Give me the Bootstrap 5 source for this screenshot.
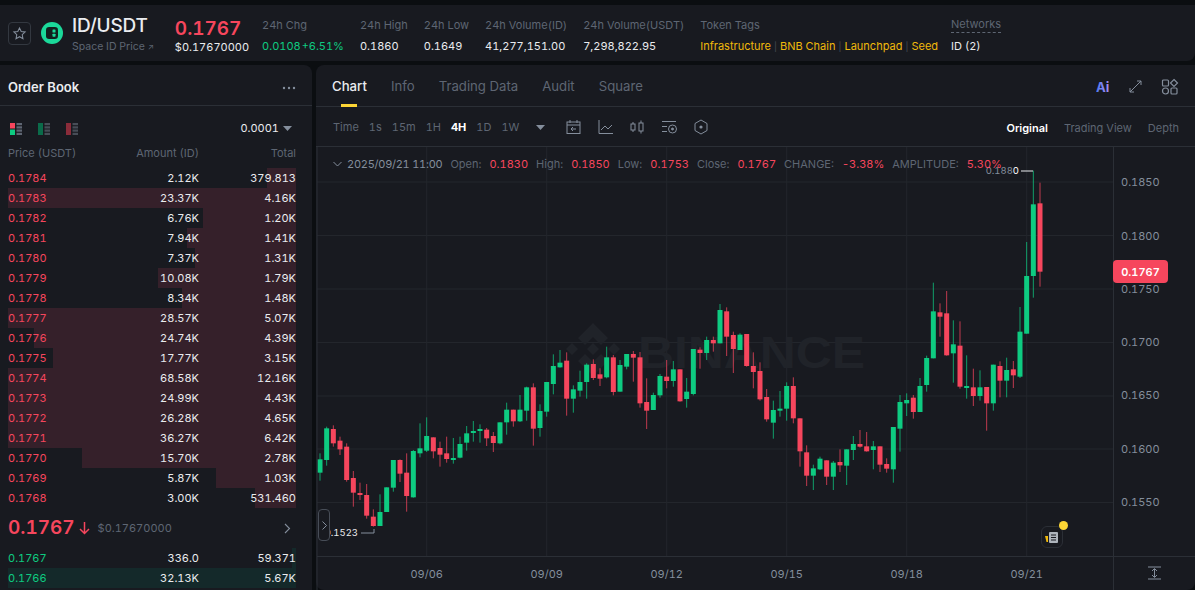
<!DOCTYPE html>
<html lang="en">

<head>
    <meta charset="UTF-8">
    <meta name="viewport" content="width=device-width, initial-scale=1.0">
    <title>ID/USDT</title>
    <link href="https://cdn.jsdelivr.net/npm/bootstrap@5.3.0/dist/css/bootstrap.min.css" rel="stylesheet">
    <style>
        html, body { height: 590px; overflow: hidden; }
        body { background: #0b0e11; color: #eaecef; font-family: "Inter", "Liberation Sans", sans-serif; font-size: 11px; font-variant-numeric: tabular-nums; }
        .panel { background: #181a20; }
        .muted { color: #848e9c; }
        .dim { color: #5e6673; }
        .up { color: #0ecb81; }
        .down { color: #f6465d; }
        .line-b { border-bottom: 1px solid #2b2f36; }

        .top-bar { margin-top: 5px; height: 56px; padding: 0 0 0 8px; border-radius: 0 0 8px 0; }
        .star-box { width: 23px; height: 23px; border: 1px solid #333840; border-radius: 4px; margin-right: 10px; }
        .logo { margin-right: 9px; }
        .pair-col { margin-top: 3px; }
        .pair-name { font-size: 19px; font-weight: 500; line-height: 22px; letter-spacing: -.2px; }
        .pair-sub { margin-top: 3px; line-height: 14px; font-size: 10.5px; color: #5e6673; }
        .price-col { margin: 6px 13px 0 21px; }
        .last-price { font-size: 19px; font-weight: 600; line-height: 22px; }
        .stats { gap: 16px; margin-top: 5px; }
        .stat-label { color: #5e6673; line-height: 14px; font-size: 11px; margin-bottom: 7px; }
        .stat-val { line-height: 14px; font-size: 11px; }
        .chg { word-spacing: -2px; }
        .tags { color: #f0b90b; }
        .tags-col { margin-right: -3px; }
        .tags i { font-style: normal; color: #474d57; margin: 0 3px; font-size: 9px; }
        .net-label { border-bottom: 1px dashed #5e6673; margin-bottom: 6px; padding-bottom: 1px; line-height: 13px; }

        .main-row { margin-top: 4px; height: 525px; gap: 4px; }
        .book { width: 312px; border-radius: 0 8px 0 0; }
        .book-head { height: 41px; padding: 6px 16px 0 8px; font-size: 13px; font-weight: 600; }
        .book-tools { height: 45px; padding: 0 20px 0 10px; }
        .book-cols { height: 16px; padding: 0 16px 0 8px; color: #5e6673; font-size: 11px; margin-top: -6px; margin-bottom: 7px; }
        .c-amt { width: 91px; text-align: right; margin-left: auto; }
        .c-tot { width: 97px; text-align: right; }
        .book-rows { padding: 0 16px 0 8px; }
        .ob-row { height: 20px; font-size: 11px; background-repeat: no-repeat; background-position: right top; }
        .ob-ask { background-image: linear-gradient(#35202a, #35202a); }
        .ob-bid { background-image: linear-gradient(#14292a, #14292a); }
        .mid { height: 40px; padding: 0 21px 0 8px; }
        .mid-price { font-size: 19px; font-weight: 600; }

        .chart-panel { flex: 1; border-radius: 8px 0 8px 8px; min-width: 0; }
        .tabs { height: 42px; padding: 2px 16px 0 16px; font-size: 13.2px; gap: 24px; color: #5e6673; }
        .tab { height: 40px; }
        .tab.active { color: #eaecef; font-weight: 500; position: relative; }
        .tab.active::after { content: ""; position: absolute; left: 9px; width: 16px; height: 3px; bottom: 0; background: #fcd535; }
        .tab-icons { gap: 14px; }
        .tools { height: 40px; padding: 1px 16px 0 17px; font-size: 11px; color: #5e6673; }
        .tf { gap: 10px; }
        .tf-caret { margin-left: 7px; }
        .tool-icons { gap: 15.5px; margin-left: 20px; }
        .views { gap: 16px; margin-left: auto; margin-top: 2px; }
        .chart-wrap { position: relative; height: 443px; }
        .chart-wrap svg.plot { display: block; }
        .legend { position: absolute; left: 17px; top: 10px; color: #5e6673; font-size: 11px; line-height: 14px; gap: 8px; }
        .legend-chev { margin-right: -3px; }
        .legend-date { letter-spacing: -.25px; }
        .toggle { position: absolute; left: 2px; top: 362px; width: 12px; height: 32px; background: #181a20; border: 1px solid #474d57; border-radius: 4px; }
        .news { position: absolute; left: 725px; top: 379px; width: 22px; height: 22px; border: 1px solid #2b2f36; border-radius: 6px; background: #181a20; }
        .news-dot { position: absolute; right: -6px; top: -6px; width: 9px; height: 9px; border-radius: 50%; background: #fcd535; }
    </style>
</head>

<body>
    <!-- Cabecalho do par -->
    <header class="panel top-bar d-flex align-items-center">
        <div class="star-box d-flex align-items-center justify-content-center">
            <svg width="15" height="15" viewBox="0 0 16 16" fill="none" stroke="#848e9c" stroke-width="1.1"><path d="M8 2l1.8 3.9 4.2.5-3.1 2.9.8 4.2L8 11.4l-3.7 2.1.8-4.2L2 6.4l4.2-.5z"/></svg>
        </div>
        <svg class="logo" width="22" height="22" viewBox="0 0 22 22"><circle cx="11" cy="11" r="11" fill="#1bd99a"/><rect x="5" y="5" width="12" height="12" rx="3.2" fill="#12201e"/><rect x="11.5" y="7.5" width="3" height="3" rx=".6" fill="#1bd99a"/><rect x="11.5" y="11.7" width="3" height="3" rx=".6" fill="#1bd99a"/></svg>
        <div class="pair-col">
            <div class="pair-name">ID/USDT</div>
            <div class="pair-sub">Space ID Price <span style="font-size:8px">↗</span></div>
        </div>
        <div class="price-col">
            <div class="last-price down">0.1767</div>
            <div class="stat-val">$0.17670000</div>
        </div>
        <div class="d-flex stats">
            <div><div class="stat-label">24h Chg</div><div class="stat-val up chg">0.0108 +6.51%</div></div>
            <div><div class="stat-label">24h High</div><div class="stat-val">0.1860</div></div>
            <div><div class="stat-label">24h Low</div><div class="stat-val">0.1649</div></div>
            <div><div class="stat-label">24h Volume(ID)</div><div class="stat-val">41,277,151.00</div></div>
            <div><div class="stat-label">24h Volume(USDT)</div><div class="stat-val">7,298,822.95</div></div>
            <div class="tags-col"><div class="stat-label">Token Tags</div><div class="stat-val tags">Infrastructure<i>|</i>BNB Chain<i>|</i>Launchpad<i>|</i>Seed</div></div>
            <div><div class="stat-label net-label">Networks</div><div class="stat-val">ID (2)</div></div>
        </div>
    </header>

    <div class="main-row d-flex">
        <!-- Livro de ofertas -->
        <aside class="panel book">
            <div class="book-head line-b d-flex align-items-center justify-content-between">
                <span>Order Book</span>
                <svg width="14" height="4" viewBox="0 0 14 4" fill="#848e9c"><circle cx="2" cy="2" r="1.2"/><circle cx="7" cy="2" r="1.2"/><circle cx="12" cy="2" r="1.2"/></svg>
            </div>
            <div class="book-tools d-flex align-items-center">
                <svg width="12" height="12" viewBox="0 0 12 12" class="me-3"><rect width="5" height="5.5" fill="#f6465d"/><rect y="6.5" width="5" height="5.5" fill="#0ecb81"/><rect x="6.5" width="5.5" height="2.2" fill="#5e6673"/><rect x="6.5" y="3.3" width="5.5" height="2.2" fill="#5e6673"/><rect x="6.5" y="6.5" width="5.5" height="2.2" fill="#5e6673"/><rect x="6.5" y="9.8" width="5.5" height="2.2" fill="#5e6673"/></svg>
                <svg width="12" height="12" viewBox="0 0 12 12" class="me-3"><rect width="5" height="12" fill="#0b6b4a"/><rect x="6.5" width="5.5" height="2.2" fill="#474d57"/><rect x="6.5" y="3.3" width="5.5" height="2.2" fill="#474d57"/><rect x="6.5" y="6.5" width="5.5" height="2.2" fill="#474d57"/><rect x="6.5" y="9.8" width="5.5" height="2.2" fill="#474d57"/></svg>
                <svg width="12" height="12" viewBox="0 0 12 12"><rect width="5" height="12" fill="#8a2c3a"/><rect x="6.5" width="5.5" height="2.2" fill="#474d57"/><rect x="6.5" y="3.3" width="5.5" height="2.2" fill="#474d57"/><rect x="6.5" y="6.5" width="5.5" height="2.2" fill="#474d57"/><rect x="6.5" y="9.8" width="5.5" height="2.2" fill="#474d57"/></svg>
                <span class="ms-auto">0.0001</span>
                <svg class="ms-1" width="9" height="5" viewBox="0 0 9 5" fill="#848e9c"><path d="M0 0h9L4.5 5z"/></svg>
            </div>
            <div class="book-cols d-flex align-items-center">
                <span>Price (USDT)</span><span class="c-amt">Amount (ID)</span><span class="c-tot">Total</span>
            </div>
            <div class="book-rows" id="asks"></div>
            <div class="mid d-flex align-items-center">
                <span class="mid-price down">0.1767</span>
                <svg class="ms-1 me-2" width="11" height="14" viewBox="0 0 11 14" fill="none" stroke="#f6465d" stroke-width="1.5"><path d="M5.5 1v11M1 8l4.5 4.5L10 8"/></svg>
                <span class="dim">$0.17670000</span>
                <svg class="ms-auto" width="7" height="11" viewBox="0 0 7 11" fill="none" stroke="#848e9c" stroke-width="1.1"><path d="M1 1l4.5 4.5L1 10"/></svg>
            </div>
            <div class="book-rows" id="bids"></div>
        </aside>

        <!-- Grafico -->
        <section class="panel chart-panel">
            <div class="tabs line-b d-flex align-items-center">
                <span class="tab active d-flex align-items-center">Chart</span>
                <span class="tab d-flex align-items-center">Info</span>
                <span class="tab d-flex align-items-center">Trading Data</span>
                <span class="tab d-flex align-items-center">Audit</span>
                <span class="tab d-flex align-items-center">Square</span>
                <span class="ms-auto d-flex align-items-center tab-icons">
                    <svg width="18" height="13" viewBox="0 0 18 13"><defs><linearGradient id="ai" x1="0" x2="1"><stop offset="0" stop-color="#4f7bf0"/><stop offset="1" stop-color="#a98cf5"/></linearGradient></defs><text x="0" y="11.500" font-family="Inter, sans-serif" font-size="13" font-weight="700" fill="url(#ai)">Ai</text></svg>
                    <svg class="me-1" width="15" height="15" viewBox="0 0 15 15" fill="none" stroke="#848e9c" stroke-width="1"><path d="M2 13L13 2M9 2h4v4M2 9v4h4"/></svg>
                    <svg width="18" height="18" viewBox="0 0 18 18" fill="none" stroke="#848e9c" stroke-width="1.2"><rect x="1.5" y="2" width="6" height="6" rx="1"/><path d="M13 1.5l3.5 3.5-3.5 3.5L9.5 5z"/><circle cx="4.5" cy="13" r="3"/><rect x="10" y="10" width="6" height="6" rx="1"/></svg>
                </span>
            </div>
            <div class="tools line-b d-flex align-items-center">
                <div class="d-flex align-items-center tf">
                    <span>Time</span><span>1s</span><span>15m</span><span>1H</span><span class="fw-bold text-white">4H</span><span>1D</span><span>1W</span>
                    <svg class="tf-caret" width="9" height="5" viewBox="0 0 9 5" fill="#848e9c"><path d="M0 0h9L4.5 5z"/></svg>
                </div>
                <div class="d-flex align-items-center tool-icons">
                    <svg width="16" height="16" viewBox="0 0 16 16" fill="none" stroke="#848e9c"><rect x="2" y="3" width="13" height="11.5"/><path d="M2 6h13M5 1v3M12 1v3M11 10H6M8 8l-2 2 2 2"/></svg>
                    <svg width="17" height="16" viewBox="0 0 17 16" fill="none" stroke="#848e9c"><path d="M2 1v13.5h14M4 11l4-4 3 3 4-4"/></svg>
                    <svg width="16" height="16" viewBox="0 0 16 16" fill="none" stroke="#848e9c"><rect x="2" y="5" width="4" height="6"/><rect x="10" y="4" width="4" height="8"/><path d="M4 3v2M4 11v2M12 1.500v2.500M12 12v2.500"/></svg>
                    <svg width="17" height="16" viewBox="0 0 17 16" fill="none" stroke="#848e9c"><path d="M1 2.500h14M1 7.500h5M1 12.500h5"/><circle cx="11.500" cy="10" r="4"/><circle cx="11.500" cy="10" r="1" fill="#848e9c"/></svg>
                    <svg width="16" height="16" viewBox="0 0 16 16" fill="none" stroke="#848e9c"><path d="M8 1l6 3.500v7L8 15l-6-3.500v-7z"/><circle cx="8" cy="8" r="1.600" fill="#848e9c" stroke="none"/></svg>
                </div>
                <div class="d-flex views">
                    <span class="text-white fw-semibold">Original</span><span>Trading View</span><span>Depth</span>
                </div>
            </div>
            <div class="chart-wrap">
                <svg class="plot" id="plot" width="879" height="443" viewBox="316 147 879 443"></svg>
                <div class="legend d-flex">
                    <svg class="legend-chev" width="9" height="14" viewBox="0 0 9 14" fill="none" stroke="#848e9c"><path d="M.5 5l4 4 4-4"/></svg>
                    <span class="muted legend-date">2025/09/21 11:00</span>
                    <span>Open:</span><span class="down">0.1830</span>
                    <span>High:</span><span class="down">0.1850</span>
                    <span>Low:</span><span class="down">0.1753</span>
                    <span>Close:</span><span class="down">0.1767</span>
                    <span>CHANGE:</span><span class="down">-3.38%</span>
                    <span>AMPLITUDE:</span><span class="down">5.30%</span>
                </div>
                <div class="toggle d-flex align-items-center justify-content-center">
                    <svg width="5" height="9" viewBox="0 0 5 9" fill="none" stroke="#848e9c"><path d="M.5 .5l4 4-4 4"/></svg>
                </div>
                <div class="news d-flex align-items-center justify-content-center">
                    <svg width="14" height="13" viewBox="0 0 14 13"><rect x="4" y="1" width="9" height="11" rx="1" fill="#aeb4bc"/><path d="M6 4h5M6 6.500h5M6 9h5" stroke="#181a20"/><path d="M0 5h3v6H1.500z" fill="#f0b90b"/></svg>
                    <span class="news-dot"></span>
                </div>
            </div>
        </section>
    </div>

    <script src="https://cdn.jsdelivr.net/npm/bootstrap@5.3.0/dist/js/bootstrap.bundle.min.js"></script>
    <script>
        // [preco, quantidade, total, largura da barra]
        const asks = [
            ['0.1784', '2.12K', '379.813', 29], ['0.1783', '23.37K', '4.16K', 288], ['0.1782', '6.76K', '1.20K', 93],
            ['0.1781', '7.94K', '1.41K', 109], ['0.1780', '7.37K', '1.31K', 101], ['0.1779', '10.08K', '1.79K', 138],
            ['0.1778', '8.34K', '1.48K', 114], ['0.1777', '28.57K', '5.07K', 288], ['0.1776', '24.74K', '4.39K', 262],
            ['0.1775', '17.77K', '3.15K', 243], ['0.1774', '68.58K', '12.16K', 288], ['0.1773', '24.99K', '4.43K', 288],
            ['0.1772', '26.28K', '4.65K', 288], ['0.1771', '36.27K', '6.42K', 288], ['0.1770', '15.70K', '2.78K', 214],
            ['0.1769', '5.87K', '1.03K', 80], ['0.1768', '3.00K', '531.460', 41]
        ];
        const bids = [['0.1767', '336.0', '59.371', 4], ['0.1766', '32.13K', '5.67K', 288]];

        function renderRows(id, rows, cls, priceCls) {
            document.getElementById(id).innerHTML = rows.map(r =>
                `<div class="ob-row ${cls} d-flex align-items-center" style="background-size:${r[3]}px 100%">
                    <span class="${priceCls}">${r[0]}</span><span class="c-amt">${r[1]}</span><span class="c-tot">${r[2]}</span>
                </div>`).join('');
        }
        renderRows('asks', asks, 'ob-ask', 'down');
        renderRows('bids', bids, 'ob-bid', 'up');

        // Velas: [cor, topo do pavio, topo do corpo, base do corpo, base do pavio]
        const seg1 = 'g460,478,518,542 g380,385,480,497 r376,387,430,440 r410,422,448,465 r430,440,540,545 r513,534,578,620 r548,579,585,600 r552,585,647,656 r628,650,678,680 g583,636,678,678 g562,562,636,636 g480,480,563,575 r478,480,521,546 r460,518,588,635 g450,453,592,593 g370,445,460,472 g352,408,452,456 r412,412,454,475 r425,444,464,500 r410,460,477,488 g414,474,480,491 g410,432,473,475 g378,400,428,452 g363,393,398,425 g373,387,392,428 r384,389,415,438 r396,408,429,456 g367,367,430,433 g308,329,367,404 r329,329,364,380 g285,329,364,366 g260,262,332,362 r250,262,386,437 g313,333,384,410 g246,246,335,350 g163,198,252,283 g150,188,202,203 r157,182,296,347 g256,268,296,338 g212,246,272,290 g190,194,246,296 r178,192,234,240 r205,223,236,258 g140,172,232,235 r165,172,276,286';
        const seg2 = 'g210,225,305,305 g192,192,230,238 r183,192,203,275 r186,202,340,353 r265,336,362,417 g308,315,360,360 g252,258,316,323 r210,260,273,295 g213,238,273,290 r238,238,334,335 g264,305,327,353 g177,177,312,316 r172,179,189,236 g140,150,189,210 r140,150,160,185 g42,60,160,160 r52,64,140,198 r125,135,177,249 g130,134,180,180 r132,132,228,230 r187,228,246,295 r217,243,328,332 r297,321,388,395 g332,360,398,446 g303,356,362,380 g277,288,356,392 r262,288,385,400 r385,385,484,530 r466,487,557,588 g524,535,557,600 g500,506,538,540 r511,511,560,585 g513,518,560,600 r478,516,526,546 g478,478,527,585 g438,462,480,510 r420,462,470,473 r426,469,484,485 g453,469,480,538 r469,469,524,546 r505,522,536,548 g411,411,538,578';
        const seg3 = 'g705,726,806,875 g700,720,730,768 r705,713,756,776 g654,678,756,756 g587,594,675,695 g368,454,595,595 r430,457,470,530 r393,460,586,587 g481,553,580,668 r484,557,680,686 g586,678,684,716 r626,682,708,738 g631,682,708,722 r681,681,730,812 g614,614,730,752 r604,618,662,712 g593,630,662,712 r603,628,646,684 g441,515,650,654 g246,348,521,521 g32,133,348,413 r68,130,335,380';

        function parseSeg(str, startN, originY) {
            return str.split(' ').map((s, i) => {
                const v = s.slice(1).split(',').map(n => originY + n / 3);
                return { n: startN + i, color: s[0] === 'g' ? '#0ecb81' : '#f6465d', v };
            });
        }
        const candles = [...parseSeg(seg1, 0, 300), ...parseSeg(seg2, 45, 290), ...parseSeg(seg3, 87, 160)];

        let svg = '';
        // Grade
        const grid = '#23262c';
        [182, 235.5, 289, 342.5, 396, 449, 502.5].forEach(y => { svg += `<line x1="317" x2="1113" y1="${y}" y2="${y}" stroke="${grid}"/>`; });
        [426.7, 546.7, 666.7, 786.7, 906.7, 1026.7].forEach(x => { svg += `<line x1="${x}" x2="${x}" y1="147" y2="556" stroke="${grid}"/>`; });

        // Marca d'agua
        svg += `<g fill="#202329" transform="translate(3 0)"><path d="M590 323l15 15-7 7-8-8-8 8-7-7z"/><path d="M590 343l6 6-6 6-6-6zM569 343l6 6-6 6-6-6zM611 343l6 6-6 6-6-6z"/><path d="M590 376l-15-15 7-7 8 8 8-8 7 7z"/></g>`;
        svg += `<text x="638" y="368" font-family="Liberation Sans, sans-serif" font-size="45" font-weight="700" fill="#202329" textLength="227" lengthAdjust="spacingAndGlyphs">BINANCE</text>`;

        // Velas
        candles.forEach(c => {
            const x = 320 + c.n * 20 / 3;
            svg += `<line x1="${x}" x2="${x}" y1="${c.v[0]}" y2="${c.v[3]}" stroke="${c.color}" stroke-opacity=".75"/>`;
            svg += `<rect x="${x - 2.5}" y="${c.v[1]}" width="5" height="${Math.max(c.v[2] - c.v[1], 2)}" fill="${c.color}"/>`;
        });

        // Eixos
        svg += `<line x1="317" x2="317" y1="147" y2="590" stroke="#2b2f36"/>`;
        svg += `<line x1="1113.500" x2="1113.500" y1="147" y2="590" stroke="#2b2f36"/>`;
        svg += `<line x1="317" x2="1195" y1="556.500" y2="556.500" stroke="#2b2f36"/>`;
        const axisFont = 'font-family="Inter, sans-serif" font-size="11"';
        ['0.1850', '0.1800', '0.1750', '0.1700', '0.1650', '0.1600', '0.1550'].forEach((t, i) => {
            svg += `<text x="1121" y="${[186, 239.500, 293, 346, 399, 453, 506][i]}" ${axisFont} fill="#848e9c">${t}</text>`;
        });
        ['09/06', '09/09', '09/12', '09/15', '09/18', '09/21'].forEach((t, i) => {
            svg += `<text x="${426.700 + i * 120}" y="578" text-anchor="middle" ${axisFont} fill="#848e9c">${t}</text>`;
        });

        // Preco atual
        svg += `<rect x="1113" y="260" width="55" height="23" rx="4" fill="#f6465d"/>`;
        svg += `<text x="1140.500" y="276" text-anchor="middle" font-family="Inter, sans-serif" font-size="11" font-weight="600" fill="#fff">0.1767</text>`;

        // Maxima e minima visiveis
        svg += `<path d="M1021 171h12" stroke="#eaecef"/>`;
        svg += `<text x="1019" y="174" text-anchor="end" font-family="Inter, sans-serif" font-size="9.500" fill="#848e9c">0.188<tspan fill="#fff">0</tspan></text>`;
        svg += `<path d="M361 533h13v-4" stroke="#848e9c" fill="none"/>`;
        svg += `<text x="358" y="536" text-anchor="end" font-family="Inter, sans-serif" font-size="9.500" fill="#eaecef">0.1523</text>`;

        // Botao de escala
        svg += `<path d="M1148 567h13M1148 579h13M1154.500 569v8M1152 571l2.500-2.500 2.500 2.500M1152 575l2.500 2.500 2.500-2.500" stroke="#848e9c" fill="none"/>`;

        document.getElementById('plot').innerHTML = svg;
    </script>
</body>
</html>
